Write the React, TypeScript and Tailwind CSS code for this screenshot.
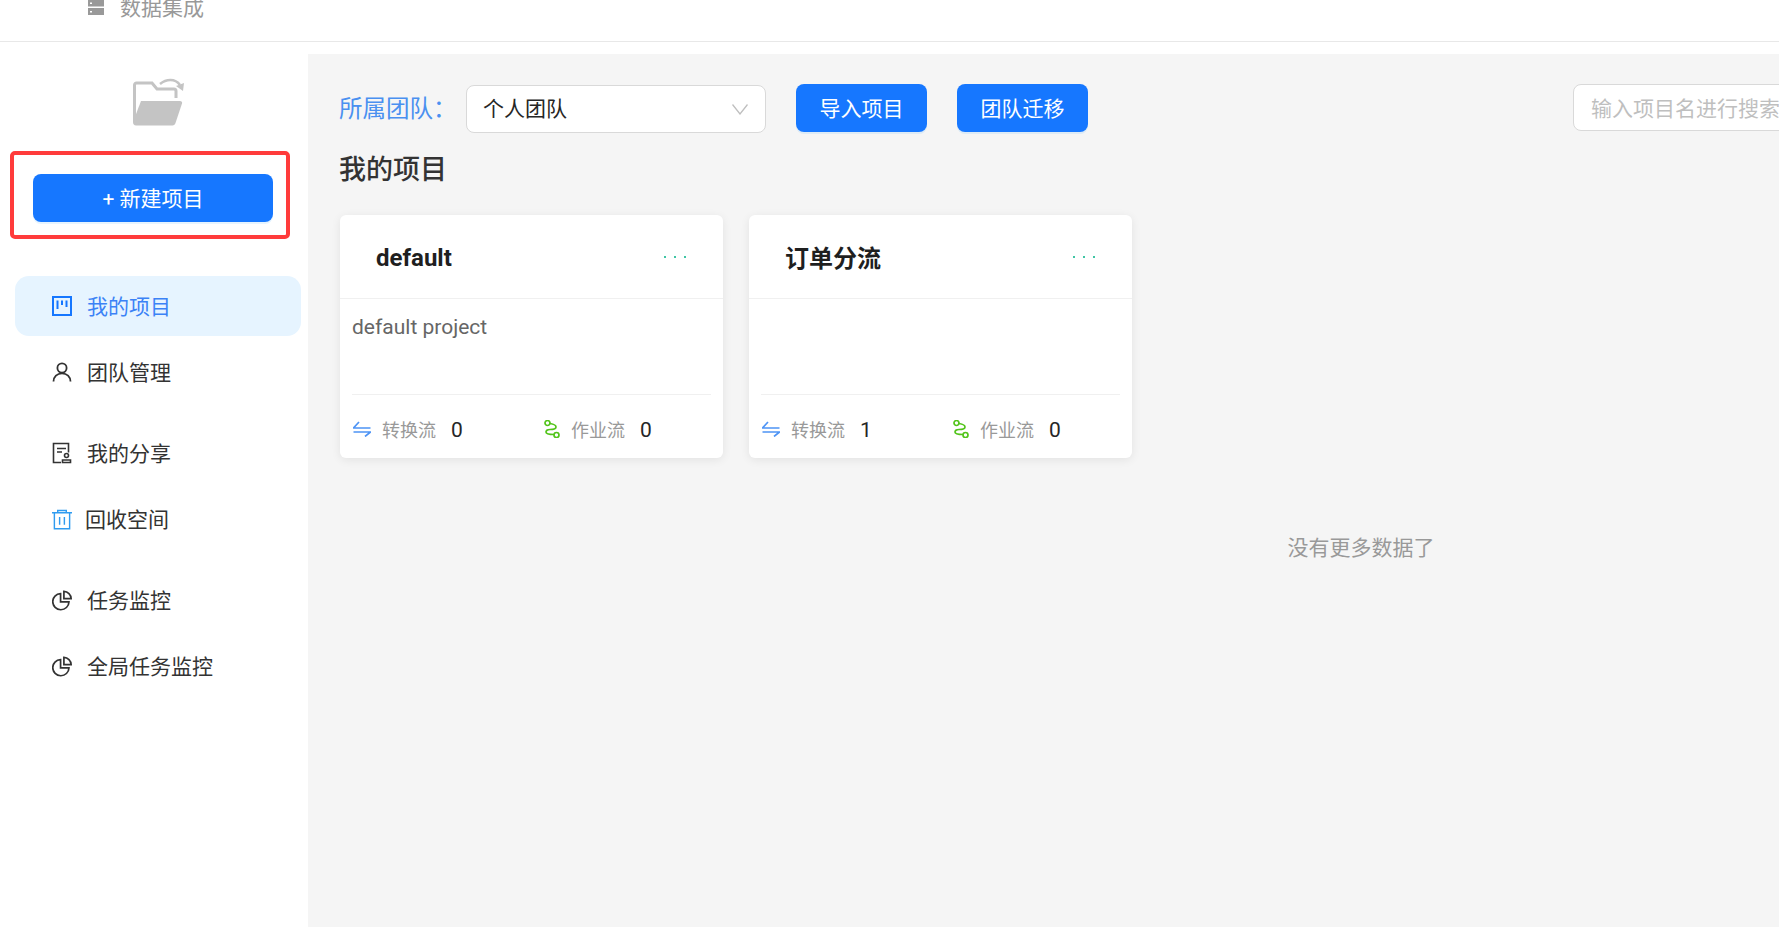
import type { ReactNode } from 'react';

const FONT = { fontFamily: '"Noto Sans CJK SC", "Noto Sans", sans-serif' };

function ProjectIcon() {
  return (
    <svg width="20" height="20" viewBox="0 0 20 20" fill="none" stroke="currentColor">
      <rect x="1" y="1" width="18" height="18" strokeWidth="2" />
      <path d="M5.5 4.5V13M10 4.5V9M14.5 4.5V11" strokeWidth="2" />
    </svg>
  );
}

function UserIcon() {
  return (
    <svg width="20" height="20" viewBox="0 0 20 20" fill="none" stroke="currentColor" strokeWidth="1.8">
      <circle cx="10" cy="6" r="4.6" />
      <path d="M1.5 19.5c0-4.6 3.6-8.2 8.5-8.2s8.5 3.6 8.5 8.2" />
    </svg>
  );
}

function ShareIcon() {
  return (
    <svg width="20" height="22" viewBox="0 0 20 22" fill="none" stroke="currentColor" strokeWidth="1.6">
      <path d="M9 20.500H1.500V1.500h15v9" />
      <path d="M5 6.500h9M5 10h5" />
      <circle cx="14.500" cy="13.500" r="2" />
      <path d="M10.500 20.500v-2.500h8v2.500z" />
    </svg>
  );
}

function TrashIcon() {
  return (
    <svg width="21" height="21" viewBox="0 0 21 21" fill="none" stroke="#2f9bf0" strokeWidth="1.5">
      <path d="M0 3.500h21M6 3.500V1h9v2.500" />
      <path d="M2.500 3.500v16.800h16V3.500" />
      <path d="M8 8v8M13 8v8" />
    </svg>
  );
}

function PieIcon() {
  return (
    <svg width="21" height="21" viewBox="0 0 21 21" fill="none" stroke="currentColor" strokeWidth="1.8">
      <path d="M9 3.200a8.500 8.500 0 1 0 8.800 8.800H9z" />
      <path d="M12.500 1a7.800 7.800 0 0 1 7.600 7.600h-7.600z" />
    </svg>
  );
}

function FolderIcon() {
  return (
    <svg width="52" height="48" viewBox="0 0 52 48">
      <path
        d="M1.500 44V7a2 2 0 0 1 2-2H19l5 6h17a2 2 0 0 1 2 2v7"
        fill="none"
        stroke="#c4c4c4"
        strokeWidth="3"
      />
      <path
        d="M8 23h39c1.500 0 2.500 1 2 2.500L42.500 45c-.5 1.500-1.500 2.500-3 2.500H3c-2 0-3-1.500-3-3.500z"
        fill="#c4c4c4"
      />
      <path d="M27 6C33 1 42 0 47 7" fill="none" stroke="#c4c4c4" strokeWidth="2.500" />
      <path d="M43 8l8-3-1 8z" fill="#c4c4c4" />
    </svg>
  );
}

function SwapIcon() {
  return (
    <svg width="18" height="16" viewBox="0 0 18 16" fill="none" stroke="#4e94f5" strokeWidth="1.700">
      <path d="M0 7h17.500M.5 7l5.500-6" />
      <path d="M18 11H.5M17.500 11L12 15.500" />
    </svg>
  );
}

function FlowIcon() {
  return (
    <svg width="16" height="18" viewBox="0 0 16 18" fill="none" stroke="#52c41a" strokeWidth="1.700">
      <circle cx="3.500" cy="3" r="2.500" />
      <circle cx="12.500" cy="15" r="2.500" />
      <path d="M6 3.500c3 .5 6 1.500 6 3.500 0 2-3 2.500-6 2.500-2.500 0-4 1-4 2.500 0 1.500 3 2.500 8 2.500" />
    </svg>
  );
}

type MenuItem = {
  label: string;
  icon: ReactNode;
  active?: boolean;
  groupStart?: boolean;
  textClass?: string;
};

const menu: MenuItem[] = [
  { label: '我的项目', icon: <ProjectIcon />, active: true },
  { label: '团队管理', icon: <UserIcon /> },
  { label: '我的分享', icon: <ShareIcon />, groupStart: true },
  { label: '回收空间', icon: <TrashIcon />, textClass: 'ml-[13px]' },
  { label: '任务监控', icon: <PieIcon />, groupStart: true },
  { label: '全局任务监控', icon: <PieIcon /> },
];

function Sidebar() {
  return (
    <aside className="w-[308px] shrink-0 bg-white pt-[36px]">
      <div className="ml-[133px] h-[48px] w-[52px]">
        <FolderIcon />
      </div>
      <div className="ml-[10px] mt-[25px] h-[88px] w-[280px] rounded-[5px] border-[4px] border-[#ff3b3b] px-[19px] pt-[19px]">
        <button
          type="button"
          className="h-[48px] w-[240px] rounded-[8px] bg-[#1677ff] pt-[2px] text-[21px] text-white shadow-[0_2px_0_rgba(5,145,255,0.1)]"
        >
          <span className="font-['Roboto']">+ </span>新建项目
        </button>
      </div>
      <nav className="ml-[15px] mt-[37px] w-[286px]">
        {menu.map((item) => (
          <div
            key={item.label}
            className={`flex h-[60px] items-center rounded-[14px] pl-[37px] text-[21px] ${
              item.groupStart ? 'mt-[21px]' : 'mt-[6px]'
            } ${item.active ? 'bg-[#e6f4ff] text-[#3b82f6]' : 'text-[#333333]'}`}
          >
            <span className={`flex w-[20px] justify-center ${item.active ? 'text-[#1677ff]' : 'text-[#333333]'}`}>
              {item.icon}
            </span>
            <span className={item.textClass ?? 'ml-[15px]'}>{item.label}</span>
          </div>
        ))}
      </nav>
    </aside>
  );
}

type CardProps = {
  title: string;
  latinTitle?: boolean;
  description?: string;
  transforms: number;
  jobs: number;
};

function ProjectCard({ title, latinTitle, description, transforms, jobs }: CardProps) {
  return (
    <div className="h-[243px] w-[383px] rounded-[6px] bg-white shadow-[0_2px_10px_rgba(0,0,0,0.08)]">
      <div className="flex h-[84px] items-center justify-between border-b border-[#f0f0f0] pl-[36px] pr-[37px]">
        <span className={`text-[24px] font-bold text-[#1f1f1f] ${latinTitle ? "pt-[2px] font-['Roboto']" : ''}`}>
          {title}
        </span>
        <span className="mt-[1px] flex gap-[8px]">
          <i className="h-[2px] w-[2px] bg-[#3fc5a5]" />
          <i className="h-[2px] w-[2px] bg-[#3fc5a5]" />
          <i className="h-[2px] w-[2px] bg-[#3fc5a5]" />
        </span>
      </div>
      <div className="h-[96px] px-[12px] pt-[12px]">
        <div className="h-[84px] border-b border-[#f0f0f0] font-['Roboto'] text-[21px] leading-[32px] text-[#666666]">
          {description}
        </div>
      </div>
      <div className="flex h-[62px] items-center pl-[13px] pt-[6px]">
        <div className="flex w-[191px] items-center">
          <SwapIcon />
          <span className="ml-[11px] text-[18px] text-[#999999]">转换流</span>
          <span className="ml-[15px] pt-[3px] font-['Roboto'] text-[21px] text-[#262626]">{transforms}</span>
        </div>
        <div className="flex items-center">
          <FlowIcon />
          <span className="ml-[11px] text-[18px] text-[#999999]">作业流</span>
          <span className="ml-[15px] pt-[3px] font-['Roboto'] text-[21px] text-[#262626]">{jobs}</span>
        </div>
      </div>
    </div>
  );
}

export default function App() {
  return (
    <div className="flex h-[927px] w-[1779px] flex-col overflow-hidden bg-white" style={FONT}>
      <header className="h-[42px] shrink-0 border-b border-[#e8e8e8] bg-white pl-[88px]">
        <div className="-mt-[8px] flex h-[30px] items-center text-[21px] text-[#999999]">
          <svg width="16" height="15" viewBox="0 0 16 15" fill="#999999" className="mt-[1px]">
            <path fillRule="evenodd" d="M0 0h16v6.500H0zM2 2.500v1.500h2V2.500z" />
            <path fillRule="evenodd" d="M0 8h16v7H0zM2 11v1.500h2V11z" />
          </svg>
          <span className="ml-[16px]">数据集成</span>
        </div>
      </header>
      <div className="flex min-h-0 flex-1 bg-white pt-[12px]">
        <div className="-mt-[12px]">
          <Sidebar />
        </div>
        <main className="min-w-0 flex-1 overflow-hidden bg-[#f5f5f5] pl-[32px] pt-[30px]">
          <div className="flex h-[49px] items-start">
            <span className="-ml-[1px] h-[48px] w-[127px] shrink-0 text-[23.5px] leading-[46px] text-[#4a90f0]">
              所属团队：
            </span>
            <div className="mt-[1px] flex h-[48px] w-[300px] shrink-0 items-center justify-between rounded-[8px] border border-[#d9d9d9] bg-white pl-[16px] pr-[17px] text-[21px] text-[#262626]">
              <span className="pb-[2px]">个人团队</span>
              <svg width="16" height="11" viewBox="0 0 16 11" fill="none" stroke="#bfbfbf" strokeWidth="1.300">
                <path d="M.5.500 8 10 15.500.500" />
              </svg>
            </div>
            <button
              type="button"
              className="ml-[30px] h-[48px] w-[131px] shrink-0 rounded-[8px] bg-[#1677ff] text-[21px] text-white shadow-[0_2px_0_rgba(5,145,255,0.1)]"
            >
              导入项目
            </button>
            <button
              type="button"
              className="ml-[30px] h-[48px] w-[131px] shrink-0 rounded-[8px] bg-[#1677ff] text-[21px] text-white shadow-[0_2px_0_rgba(5,145,255,0.1)]"
            >
              团队迁移
            </button>
            <div className="ml-[485px] flex h-[47px] w-[260px] shrink-0 items-center rounded-[8px] border border-[#d9d9d9] bg-white pl-[17px] text-[21px] whitespace-nowrap text-[#bfbfbf]">
              输入项目名进行搜索
            </div>
          </div>
          <h2 className="-ml-[1px] mt-[16px] text-[27px] font-medium leading-[38px] text-[#333333]">我的项目</h2>
          <div className="mt-[28px] flex gap-[26px]">
            <ProjectCard title="default" latinTitle description="default project" transforms={0} jobs={0} />
            <ProjectCard title="订单分流" transforms={1} jobs={0} />
          </div>
          <div className="mt-[73px] w-[2042px] text-center text-[21px] leading-[30px] text-[#999999]">
            没有更多数据了
          </div>
        </main>
      </div>
    </div>
  );
}
